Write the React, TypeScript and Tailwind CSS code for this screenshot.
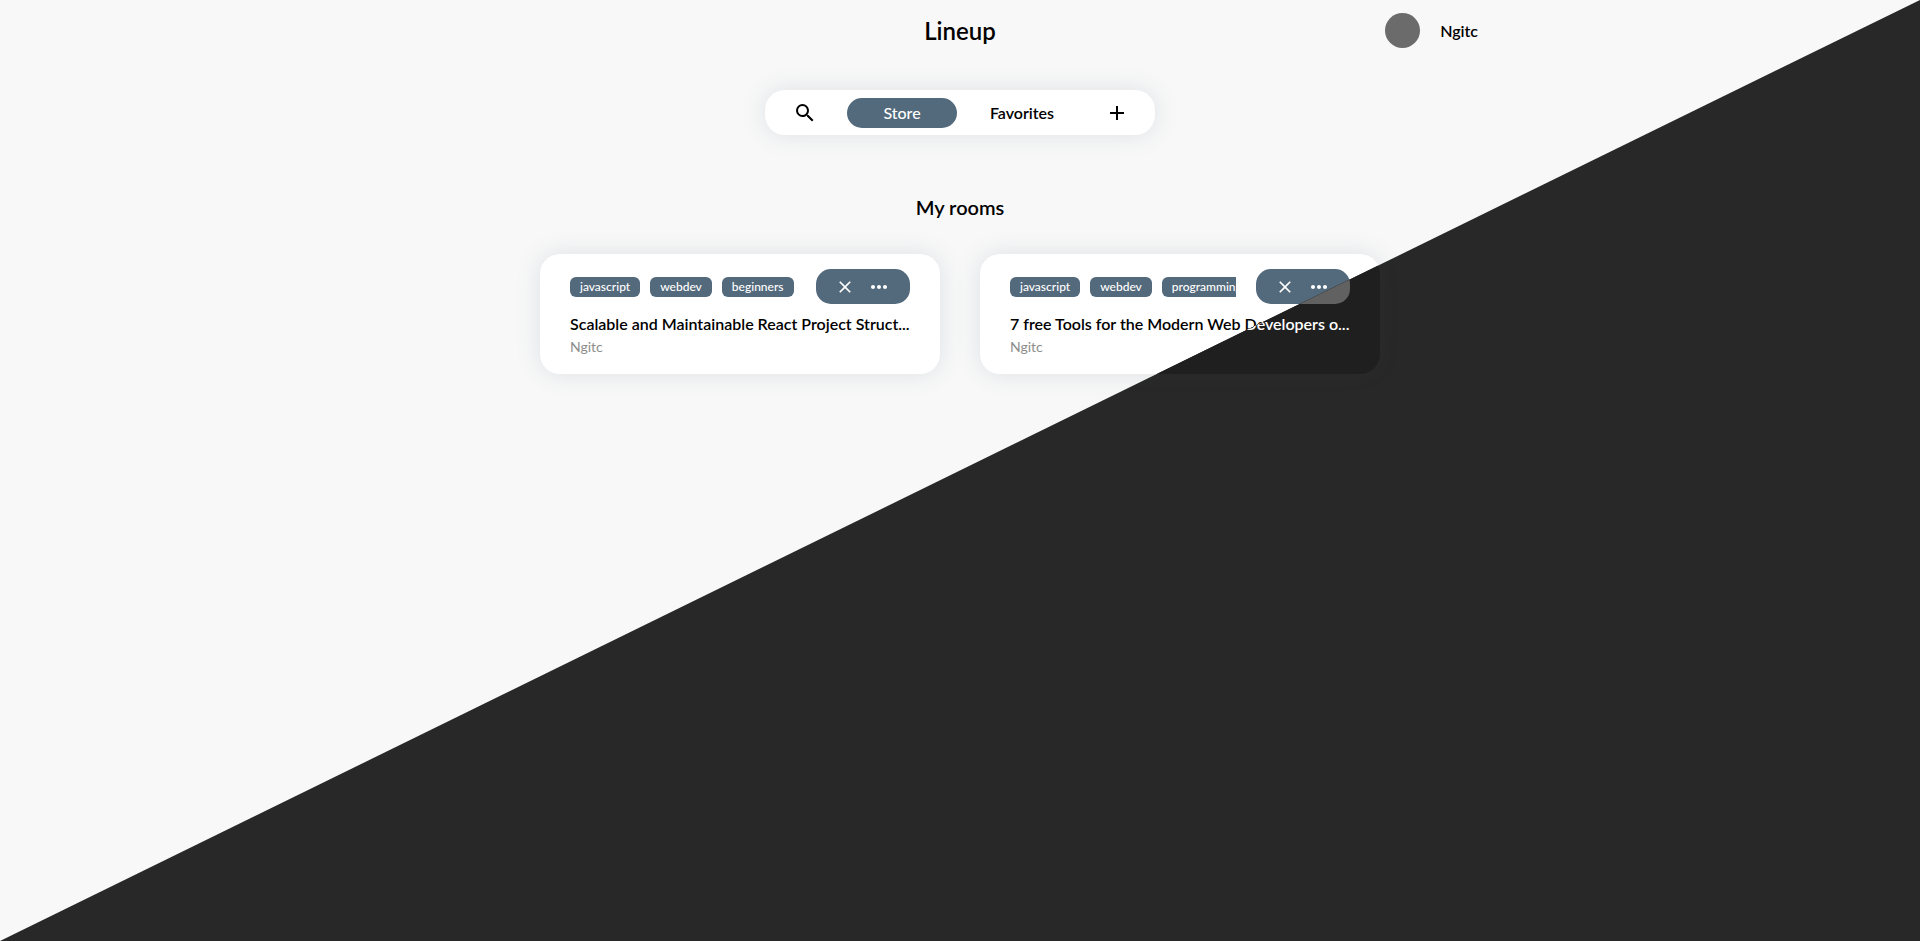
import React from "react";

type Theme = "light" | "dark";

type Palette = {
  page: string;
  panel: string;
  accent: string;
  avatar: string;
  muted: string;
};

const palettes: Record<Theme, Palette> = {
  light: {
    page: "bg-[#f8f8f8] text-black",
    panel: "bg-white shadow-[0_0_24px_rgba(83,105,124,0.16)]",
    accent: "bg-[#53697c] text-white",
    avatar: "bg-[#6b6b6b]",
    muted: "text-[#8c8c8c]",
  },
  dark: {
    page: "bg-[#282828] text-white",
    panel: "bg-[#1f1f1f] shadow-[0_0_24px_rgba(97,97,97,0.06)]",
    accent: "bg-[#616161] text-white",
    avatar: "bg-[#6b6b6b]",
    muted: "text-[#8c8c8c]",
  },
};

const rooms = [
  {
    title: "Scalable and Maintainable React Project Struct...",
    owner: "Ngitc",
    tags: ["javascript", "webdev", "beginners"],
  },
  {
    title: "7 free Tools for the Modern Web Developers o...",
    owner: "Ngitc",
    tags: ["javascript", "webdev", "programming"],
  },
];

const iconPaths = {
  search:
    "M15.5 14h-.79l-.28-.27A6.471 6.471 0 0 0 16 9.5 6.5 6.5 0 1 0 9.5 16c1.61 0 3.09-.59 4.23-1.57l.27.28v.79l5 4.99L20.49 19l-4.99-5zm-6 0C7.01 14 5 11.99 5 9.5S7.01 5 9.5 5 14 7.01 14 9.5 11.99 14 9.5 14z",
  add: "M19 13h-6v6h-2v-6H5v-2h6V5h2v6h6v2z",
  close:
    "M19 6.41 17.59 5 12 10.59 6.41 5 5 6.41 10.59 12 5 17.59 6.41 19 12 13.41 17.59 19 19 17.59 13.41 12z",
  more: "M6 10c-1.1 0-2 .9-2 2s.9 2 2 2 2-.9 2-2-.9-2-2-2zm12 0c-1.1 0-2 .9-2 2s.9 2 2 2 2-.9 2-2-.9-2-2-2zm-6 0c-1.1 0-2 .9-2 2s.9 2 2 2 2-.9 2-2-.9-2-2-2z",
};

function Icon({ name, className }: { name: keyof typeof iconPaths; className: string }) {
  return (
    <svg viewBox="0 0 24 24" fill="currentColor" className={className} aria-hidden="true">
      <path d={iconPaths[name]} />
    </svg>
  );
}

function RoomCard({ room, palette }: { room: (typeof rooms)[number]; palette: Palette }) {
  return (
    <article className={`h-[120px] w-[400px] rounded-[20px] px-[30px] pt-[15px] ${palette.panel}`}>
      <div className="flex h-[35px] items-center gap-5">
        <div className="flex min-w-0 flex-1 gap-[10px] overflow-hidden pt-px">
          {room.tags.map((tag) => (
            <span
              key={tag}
              className={`h-5 shrink-0 rounded-[6px] px-[10px] text-[12px] font-medium leading-5 ${palette.accent}`}
            >
              {tag}
            </span>
          ))}
        </div>
        <div
          className={`flex h-[35px] w-[94px] shrink-0 items-center justify-between rounded-[15px] pl-[18.5px] pr-[19px] ${palette.accent}`}
        >
          <Icon name="close" className="size-5" />
          <Icon name="more" className="mt-px size-6" />
        </div>
      </div>
      <h3 className="mt-[10px] whitespace-nowrap text-[16px] font-semibold leading-5">{room.title}</h3>
      <p className={`mt-[3px] text-[14px] leading-5 ${palette.muted}`}>{room.owner}</p>
    </article>
  );
}

function Page({ theme }: { theme: Theme }) {
  const palette = palettes[theme];
  return (
    <div className={`h-[941px] w-full ${palette.page}`}>
      <header className="mx-auto grid h-[62px] w-[1036px] grid-cols-3 items-center">
        <h1 className="col-start-2 text-center text-[24px] font-semibold leading-[30px]">Lineup</h1>
        <div className="flex items-center justify-end gap-5">
          <span className={`mb-px size-[35px] rounded-full ${palette.avatar}`} />
          <span className="text-[16px] font-semibold">Ngitc</span>
        </div>
      </header>
      <nav
        className={`mx-auto mt-7 flex h-[45px] w-[390px] items-center rounded-[20px] pl-7 pr-[26px] text-[16px] ${palette.panel}`}
      >
        <Icon name="search" className="mt-px size-6" />
        <span
          className={`ml-[30px] flex h-[30px] w-[110px] items-center justify-center rounded-[15px] font-medium ${palette.accent}`}
        >
          Store
        </span>
        <span className="ml-[10px] w-[110px] text-center font-semibold">Favorites</span>
        <Icon name="add" className="ml-auto mt-px size-6" />
      </nav>
      <main>
        <h2 className="mt-[60px] text-center text-[20px] font-semibold leading-[25px]">My rooms</h2>
        <div className="mt-[34px] flex justify-center gap-10">
          {rooms.map((room) => (
            <RoomCard key={room.title} room={room} palette={palette} />
          ))}
        </div>
      </main>
    </div>
  );
}

export default function App() {
  return (
    <div className="grid h-[941px] overflow-hidden font-['Lato',sans-serif]">
      <div className="col-start-1 row-start-1">
        <Page theme="light" />
      </div>
      <div className="col-start-1 row-start-1 [clip-path:polygon(100%_0,100%_100%,0_100%)]" aria-hidden="true">
        <Page theme="dark" />
      </div>
    </div>
  );
}
